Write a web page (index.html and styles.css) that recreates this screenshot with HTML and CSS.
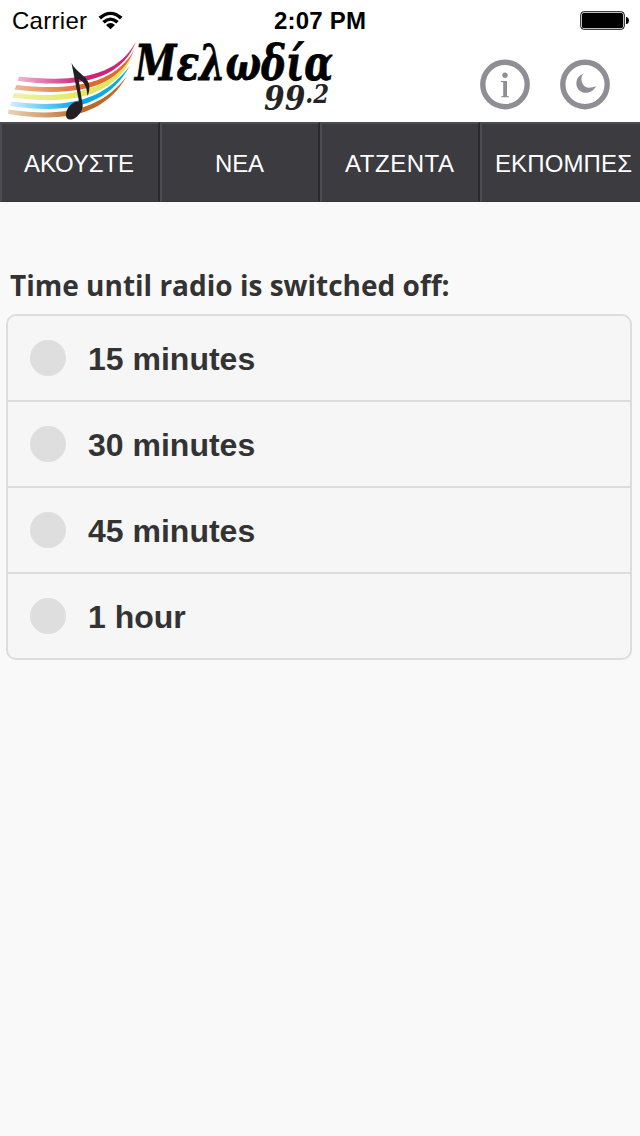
FILE: index.html
```html
<!DOCTYPE html>
<html lang="el">
<head>
<meta charset="utf-8">
<title>Μελωδία 99.2</title>
<link rel="stylesheet" href="styles.css">
</head>
<body>
<header class="top">
  <div class="status">
    <div class="carrier">
      <svg width="75" height="30"><text class="carrier-text" x="0" y="22" textLength="75">Carrier</text></svg>
      <svg class="wifi" width="26" height="20" viewBox="0 0 26 20">
        <path d="M0.500 5.800 Q12.500 -4.500 24.500 5.800 L22 8.400 Q12.500 -0.200 3 8.400Z M4.300 10 Q12.500 3 20.700 10 L18.300 12.500 Q12.500 7.200 6.700 12.500Z M8 14 Q12.500 10 17 14 L12.500 18.300Z"/>
      </svg>
    </div>
    <svg class="clock" width="94" height="30"><text class="clock-text" x="0" y="22" textLength="92">2:07 PM</text></svg>
    <svg class="battery" width="50" height="20" viewBox="0 0 50 20">
      <rect x=".75" y=".75" width="43.500" height="17.500" rx="3" fill="#fff" stroke="#000"/>
      <rect x="2" y="2" width="41" height="15" rx="1.500"/>
      <path d="M46 6h1q2 1 2 3.500t-2 3.500h-1z"/>
    </svg>
  </div>
  <div class="brand">
    <svg class="logo" width="340" height="82" viewBox="0 40 340 82">
      <defs>
        <linearGradient id="pink" gradientUnits="userSpaceOnUse" x1="12" x2="80"><stop stop-color="#f6c3dc"/><stop offset="1" stop-color="#cd2478"/></linearGradient>
        <linearGradient id="orange" gradientUnits="userSpaceOnUse" x1="12" x2="85"><stop stop-color="#eebb9c"/><stop offset="1" stop-color="#dc6c30"/></linearGradient>
        <linearGradient id="yellow" gradientUnits="userSpaceOnUse" x1="12" x2="85"><stop stop-color="#eef3a4"/><stop offset="1" stop-color="#e3e760"/></linearGradient>
        <linearGradient id="blue" gradientUnits="userSpaceOnUse" x1="10" x2="75"><stop stop-color="#d5effc"/><stop offset="1" stop-color="#08a9ea"/></linearGradient>
        <linearGradient id="brown" gradientUnits="userSpaceOnUse" x1="8" x2="80"><stop stop-color="#ecd4b6"/><stop offset="1" stop-color="#bb6928"/></linearGradient>
      </defs>
      <path fill="url(#pink)" d="M19 76.500 C77 83 118 76 136 41.500 C122 79 80 89 17.500 81Z"/>
      <path fill="url(#orange)" d="M16.500 85 C76 92 117 82 134.500 49 C120 88 77 97 14.500 89.500Z"/>
      <path fill="url(#yellow)" d="M14 93 C74 100 111 88 132 57 C115 95 74 106 12.500 97.500Z"/>
      <path fill="url(#blue)" d="M11.500 101.500 C70 109 104 100 130 65.500 C109 104 72 115 10 106Z"/>
      <path fill="url(#brown)" d="M8.500 109.500 C68 118 102 108 127 76 C106 112 71 124 8 114Z"/>
      <path fill="#231f22" d="M71.500 63 C76 72 87 76 89 84 C90 88 89 93 87.500 96 C87 88 85 82 78.500 79 L82.500 104 C84 110 77 119 71 119.500 C65 120 65 113 67.500 109 C70 104 75 101 79 101.500Z"/>
      <text class="logo-name" x="135" y="80" textLength="198" lengthAdjust="spacingAndGlyphs">Μελωδία</text>
      <text class="logo-number" x="264" y="110" textLength="65" lengthAdjust="spacingAndGlyphs">99<tspan class="logo-small" dy="-7">.2</tspan></text>
    </svg>
    <div class="actions">
      <svg width="50" height="50" viewBox="0 0 50 50">
        <circle class="ring" cx="25" cy="24.500" r="22.200"/>
        <circle class="glyph" cx="25" cy="15.300" r="2.700"/>
        <path class="glyph" d="M21 21h6v15l2 .4v.9h-8v-.9l2.200-.4v-13.700l-2.200-.3z"/>
      </svg>
      <svg width="50" height="50" viewBox="0 0 50 50">
        <circle class="ring" cx="25" cy="24.500" r="22.200"/>
        <path class="glyph" d="M23 14 C15 16 14.500 27 20 31 C26 35 33.500 32 36 26 C30 29 24.500 28 22.500 23.500 C21 20 21 17 23 14Z"/>
      </svg>
    </div>
  </div>
</header>
<nav class="tabs">
  <a class="tab"><svg width="112" height="40"><text x="0" y="29" textLength="110">ΑΚΟΥΣΤΕ</text></svg></a>
  <a class="tab"><svg width="50" height="40"><text x="0" y="29" textLength="49">ΝΕΑ</text></svg></a>
  <a class="tab"><svg width="112" height="40"><text x="1" y="29" textLength="109">ΑΤΖΕΝΤΑ</text></svg></a>
  <a class="tab tab-wide"><svg width="138" height="40"><text x="-1" y="29" textLength="137">ΕΚΠΟΜΠΕΣ</text></svg></a>
</nav>
<main class="content">
  <h1 class="title">Time until radio is switched off:</h1>
  <div class="options">
    <label class="option"><span class="dot"></span>15 minutes</label>
    <label class="option"><span class="dot"></span>30 minutes</label>
    <label class="option"><span class="dot"></span>45 minutes</label>
    <label class="option"><span class="dot"></span>1 hour</label>
  </div>
</main>
</body>
</html>
```
FILE: styles.css
```css
* { box-sizing: border-box; }
body { margin: 0; min-height: 1136px; background: #f9f9f9; color: #333; font-family: "Liberation Sans", Arial, sans-serif; }
svg { display: block; flex: none; overflow: visible; }
.top { height: 122px; background: #fff; }
.status { display: grid; grid-template-columns: 1fr 94px 1fr; height: 40px; padding: 8px 10px 0 12px; }
.carrier { display: flex; gap: 11px; }
.carrier svg, .clock { margin-top: -1px; }
.carrier .wifi { margin-top: 3px; }
.carrier-text { font-size: 24px; }
.clock-text { font-size: 24px; font-weight: 700; }
.battery { justify-self: end; margin-top: 3px; }
.brand { display: flex; justify-content: space-between; height: 82px; }
.logo-name, .logo-number { font-family: "DejaVu Serif", serif; font-style: italic; font-weight: 700; }
.logo-name { font-size: 49px; stroke: #000; stroke-width: .8px; }
.logo-number { font-size: 34px; fill: #262324; }
.logo-small { font-size: 26px; }
.actions { display: flex; gap: 30px; padding: 20px 30px 0 0; }
.ring { fill: none; stroke: #8f8e94; stroke-width: 5.4px; }
.glyph { fill: #8f8e94; }
.tabs { display: grid; grid-template-columns: repeat(4, 160px); height: 80px; }
.tab { display: flex; align-items: center; justify-content: center; background: #3b3b40; border: 2px solid #4c4c54; border-right-color: #29292d; border-bottom: 1px solid #36363b; fill: #fff; font-size: 24px; }
.tab-wide { justify-content: flex-start; padding-left: 14px; border-right: 0; }
.content { padding: 63px 8px 0 6px; }
.title { margin: 0 0 9px 4px; font: 700 28px/40px "Open Sans", "Noto Sans", sans-serif; }
.options { border: 2px solid #ddd; border-radius: 10px; overflow: hidden; background: #f6f6f6; }
.option { display: flex; align-items: center; gap: 22px; height: 86px; padding: 2px 22px 0; border-bottom: 2px solid #ddd; font-size: 32px; font-weight: 700; }
.option:last-child { height: 84px; border-bottom: 0; }
.dot { width: 36px; height: 36px; margin-top: -2px; border-radius: 50%; background: #dedede; }
```
